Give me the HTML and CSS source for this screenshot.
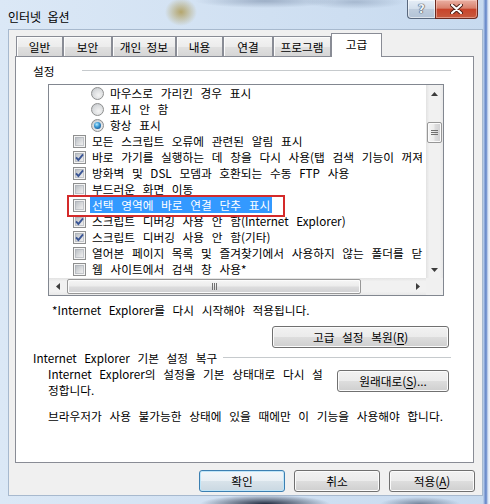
FILE: index.html
```html
<!DOCTYPE html>
<html lang="ko">
<head>
<meta charset="utf-8">
<title>인터넷 옵션</title>
<link rel="stylesheet" href="styles.css">
</head>
<body>
<div class="window">
  <div class="titlebar">
    <span class="title">인터넷 옵션</span>
    <div class="caption">
      <span class="cap-btn help">?</span>
      <span class="cap-btn close"><svg width="13" height="10" viewBox="0 0 13 10"><path d="M2 1L11 9M11 1L2 9" stroke="#4a1c14" stroke-width="4" stroke-linecap="round"/><path d="M2 1L11 9M11 1L2 9" stroke="#fff" stroke-width="2.2" stroke-linecap="round"/></svg></span>
    </div>
  </div>
  <div class="client">
    <div class="tabs">
      <span class="tab w1">일반</span>
      <span class="tab w2">보안</span>
      <span class="tab w3">개인 정보</span>
      <span class="tab w4">내용</span>
      <span class="tab w5">연결</span>
      <span class="tab w6">프로그램</span>
      <span class="tab active w7">고급</span>
    </div>
    <div class="panel">
      <div class="head head-settings"><span>설정</span><i class="rule"></i></div>
      <div class="listbox">
        <div class="items">
          <div class="row sub"><span class="radio"></span><span class="label">마우스로 가리킨 경우 표시</span></div>
          <div class="row sub"><span class="radio"></span><span class="label">표시 안 함</span></div>
          <div class="row sub"><span class="radio on"></span><span class="label">항상 표시</span></div>
          <div class="row"><span class="box"></span><span class="label">모든 스크립트 오류에 관련된 알림 표시</span></div>
          <div class="row"><span class="box"><svg class="tick" viewBox="0 0 13 13"><path d="M3 6.3L5.4 9L10 3.4" fill="none" stroke="#3a5595" stroke-width="1.9"/></svg></span><span class="label">바로 가기를 실행하는 데 창을 다시 사용(탭 검색 기능이 꺼져</span></div>
          <div class="row"><span class="box"><svg class="tick" viewBox="0 0 13 13"><path d="M3 6.3L5.4 9L10 3.4" fill="none" stroke="#3a5595" stroke-width="1.9"/></svg></span><span class="label">방화벽 및 DSL 모뎀과 호환되는 수동 FTP 사용</span></div>
          <div class="row"><span class="box"></span><span class="label">부드러운 화면 이동</span></div>
          <div class="row sel"><span class="box"></span><span class="label">선택 영역에 바로 연결 단추 표시</span></div>
          <div class="row"><span class="box"><svg class="tick" viewBox="0 0 13 13"><path d="M3 6.3L5.4 9L10 3.4" fill="none" stroke="#3a5595" stroke-width="1.9"/></svg></span><span class="label">스크립트 디버깅 사용 안 함(Internet Explorer)</span></div>
          <div class="row"><span class="box"><svg class="tick" viewBox="0 0 13 13"><path d="M3 6.3L5.4 9L10 3.4" fill="none" stroke="#3a5595" stroke-width="1.9"/></svg></span><span class="label">스크립트 디버깅 사용 안 함(기타)</span></div>
          <div class="row"><span class="box"></span><span class="label">열어본 페이지 목록 및 즐겨찾기에서 사용하지 않는 폴더를 닫</span></div>
          <div class="row"><span class="box"></span><span class="label">웹 사이트에서 검색 창 사용*</span></div>
          <div class="annot"></div>
        </div>
        <div class="vscroll">
          <span class="sbtn"><svg width="7" height="4" viewBox="0 0 7 4"><path d="M0 4L3.5 0L7 4Z" fill="#3c3c3c"/></svg></span>
          <div class="vtrack"><span class="vthumb"><svg width="7" height="5" viewBox="0 0 7 5"><path d="M0 0.5H7M0 2.5H7M0 4.5H7" stroke="#707070" stroke-width="1"/></svg></span></div>
          <span class="sbtn"><svg width="7" height="4" viewBox="0 0 7 4"><path d="M0 0L3.5 4L7 0Z" fill="#3c3c3c"/></svg></span>
        </div>
        <div class="hscroll">
          <span class="sbtn"><svg width="4" height="7" viewBox="0 0 4 7"><path d="M4 0L0 3.5L4 7Z" fill="#3c3c3c"/></svg></span>
          <div class="htrack"><span class="hthumb"><svg width="5" height="7" viewBox="0 0 5 7"><path d="M0.5 0V7M2.5 0V7M4.5 0V7" stroke="#707070" stroke-width="1"/></svg></span></div>
          <span class="sbtn"><svg width="4" height="7" viewBox="0 0 4 7"><path d="M0 0L4 3.5L0 7Z" fill="#3c3c3c"/></svg></span>
        </div>
        <div class="corner"></div>
      </div>
      <p class="note">*Internet Explorer를 다시 시작해야 적용됩니다.</p>
      <div class="btn-row"><button class="btn btn-wide">고급 설정 복원(<u>R</u>)</button></div>
      <div class="head head-reset"><span>Internet Explorer 기본 설정 복구</span><i class="rule"></i></div>
      <div class="reset-row">
        <p>Internet Explorer의 설정을 기본 상태대로 다시 설<br>정합니다.</p>
        <button class="btn btn-reset">원래대로(<u>S</u>)...</button>
      </div>
      <p class="warn">브라우저가 사용 불가능한 상태에 있을 때에만 이 기능을 사용해야 합니다.</p>
    </div>
    <div class="footer">
      <button class="btn btn-default">확인</button>
      <button class="btn">취소</button>
      <button class="btn">적용(<u>A</u>)</button>
    </div>
  </div>
</div>
</body>
</html>
```

FILE: styles.css
```css
html, body {
  margin: 0;
  padding: 0;
}
body {
  font-family: "Noto Sans CJK KR", "Noto Sans", sans-serif;
  font-size: 11.7px;
  word-spacing: 4.4px;
  color: #000;
}
p {
  margin: 0;
}
.window {
  width: 490px;
  height: 504px;
  overflow: hidden;
  display: flex;
  flex-direction: column;
  background:
    radial-gradient(ellipse 16px 14px at 181px 12px, rgba(175, 155, 85, 0.85), rgba(175, 155, 85, 0)),
    radial-gradient(ellipse 70px 7px at 265px 1px, rgba(95, 115, 145, 0.45), rgba(95, 115, 145, 0)),
    radial-gradient(ellipse 50px 7px at 355px 2px, rgba(95, 115, 145, 0.35), rgba(95, 115, 145, 0)),
    radial-gradient(ellipse 65px 9px at 265px 504px, rgba(25, 35, 55, 0.95), rgba(25, 35, 55, 0)),
    radial-gradient(ellipse 40px 7px at 420px 504px, rgba(60, 75, 100, 0.6), rgba(60, 75, 100, 0)),
    linear-gradient(to right, rgba(0,0,0,0) 483px, #9fb7de 484px, #5d80c6 486px, #d6e2f3 488px, #f4f7fb 490px),
    linear-gradient(to right, #dbe8f6 0, #d0e0f2 55%, #c7daef 100%);
}
.titlebar {
  height: 29px;
  flex: none;
  display: flex;
  justify-content: space-between;
  align-items: flex-start;
}
.title {
  margin: 9px 0 0 8px;
  font-size: 12px;
  line-height: 16px;
  word-spacing: 3px;
}
.caption {
  display: flex;
  margin-right: 12px;
}
.cap-btn {
  height: 19px;
  box-sizing: border-box;
  border: 1px solid #59687d;
  border-top: none;
  display: flex;
  align-items: center;
  justify-content: center;
}
.help {
  width: 28px;
  border-right: none;
  border-radius: 0 0 0 4px;
  background: linear-gradient(#e6eef7, #d2deeb 50%, #bfcddd 51%, #b3c3d6);
  box-shadow: inset 0 0 0 1px rgba(255, 255, 255, 0.55);
  font-family: "DejaVu Sans", sans-serif;
  font-weight: bold;
  font-size: 12px;
  color: #eef3f9;
  text-shadow: 0 0 1px #3b4656, 0 0 1px #3b4656, 0 0 1px #3b4656;
}
.close {
  width: 43px;
  border-radius: 0 0 4px 0;
  border-color: #6b2a20;
  background: linear-gradient(#eab0a3, #d9816d 45%, #c8442b 52%, #c75a3f 100%);
  box-shadow: inset 0 0 0 1px rgba(255, 220, 210, 0.45);
}
.client {
  margin-left: 8px;
  width: 475px;
  height: 467px;
  box-sizing: border-box;
  border: 1px solid #a7b9ce;
  background: #f0f0f0;
  padding-top: 3px;
}
.tabs {
  display: flex;
  align-items: flex-end;
  height: 23px;
  margin-left: 7px;
}
.tab {
  height: 20px;
  box-sizing: border-box;
  border: 1px solid #898c95;
  border-bottom: none;
  background: linear-gradient(#f4f4f4, #ececec 50%, #e0e0e0 51%, #d6d6d6);
  box-shadow: inset 1px 1px 0 #fcfcfc;
  text-align: center;
  line-height: 19px;
  word-spacing: 2px;
}
.tab.active {
  height: 24px;
  margin-bottom: -1px;
  position: relative;
  z-index: 1;
  background: #fff;
  box-shadow: none;
  line-height: 20px;
}
.w1 { width: 47px; }
.w2 { width: 49px; }
.w3 { width: 64px; }
.w4 { width: 47px; }
.w5 { width: 50px; }
.w6 { width: 58px; }
.w7 { width: 51px; }
.panel {
  margin-left: 6px;
  width: 459px;
  height: 407px;
  box-sizing: border-box;
  border: 1px solid #898c95;
  background: #fff;
}
.head {
  display: flex;
  align-items: center;
  height: 16px;
  padding-left: 17px;
  margin-right: 22px;
  white-space: nowrap;
}
.head-settings {
  margin-top: 5px;
}
.head-settings .rule {
  margin-left: 27px;
}
.head-reset {
  margin-top: 1px;
}
.head-reset .rule {
  margin-left: 6px;
}
.rule {
  flex: 1;
  height: 0;
  border-top: 1px solid #c6cacd;
}
.listbox {
  margin: 6px 0 0 32px;
  width: 396px;
  height: 212px;
  box-sizing: border-box;
  border: 1px solid #828790;
  display: grid;
  grid-template-columns: 377px 17px;
  grid-template-rows: 193px 17px;
}
.items {
  position: relative;
  overflow: hidden;
}
.row {
  height: 16px;
  display: flex;
  align-items: center;
  padding-left: 24px;
  white-space: nowrap;
  line-height: 16px;
}
.row.sub {
  padding-left: 42px;
}
.label {
  padding: 0 2px;
}
.sel .label {
  background: #3399ff;
  color: #fff;
}
.box {
  flex: none;
  width: 13px;
  height: 13px;
  margin-right: 4px;
  box-sizing: border-box;
  border: 1px solid #8e8f8f;
  background: #f4f4f4;
  position: relative;
}
.box::before {
  content: "";
  position: absolute;
  left: 1px;
  top: 1px;
  width: 9px;
  height: 9px;
  background: linear-gradient(135deg, #b5bac0, #e4e5e6 70%, #f2f2f3);
  box-shadow: inset 0 0 0 1px rgba(170, 175, 182, 0.6);
}
.tick {
  position: absolute;
  left: -1px;
  top: -1px;
  width: 13px;
  height: 13px;
}
.radio {
  flex: none;
  width: 13px;
  height: 13px;
  margin-right: 4px;
  box-sizing: border-box;
  border: 1px solid #8e8f8f;
  border-radius: 50%;
  background: radial-gradient(circle at 60% 65%, #f4f4f4 0, #dadcde 55%, #b9bec3 100%);
  position: relative;
}
.radio.on::after {
  content: "";
  position: absolute;
  left: 2px;
  top: 2px;
  width: 7px;
  height: 7px;
  border-radius: 50%;
  background: radial-gradient(circle at 40% 35%, #b6ecff 0, #3d9bd6 40%, #15528f 85%);
}
.annot {
  position: absolute;
  left: 18px;
  top: 110px;
  width: 218px;
  height: 22px;
  box-sizing: border-box;
  border: 2px solid #d42a2a;
}
.vscroll {
  display: flex;
  flex-direction: column;
  background: linear-gradient(to right, #e2e2e2, #f1f1f1 20%, #f1f1f1 80%, #e8e8e8);
}
.sbtn {
  flex: none;
  width: 17px;
  height: 17px;
  display: flex;
  align-items: center;
  justify-content: center;
}
.vtrack {
  flex: 1;
  padding-top: 20px;
}
.vthumb {
  display: flex;
  align-items: center;
  justify-content: center;
  margin-left: 1px;
  width: 15px;
  height: 21px;
  box-sizing: border-box;
  border: 1px solid #979797;
  border-radius: 2px;
  background: linear-gradient(to right, #f6f6f6, #ececec 45%, #dcdcdd 55%, #d0d0d2);
  box-shadow: inset 0 0 0 1px #fbfbfb;
}
.hscroll {
  display: flex;
  background: linear-gradient(#e2e2e2, #f1f1f1 20%, #f1f1f1 80%, #e8e8e8);
}
.htrack {
  flex: 1;
}
.hthumb {
  display: flex;
  align-items: center;
  justify-content: center;
  margin: 1px 0 0 1px;
  width: 294px;
  height: 15px;
  box-sizing: border-box;
  border: 1px solid #979797;
  border-radius: 2px;
  background: linear-gradient(#f6f6f6, #ececec 45%, #dcdcdd 55%, #d0d0d2);
  box-shadow: inset 0 0 0 1px #fbfbfb;
}
.corner {
  background: #f0f0f0;
}
.note {
  margin: 6px 0 0 36px;
  line-height: 16px;
  white-space: nowrap;
}
.btn-row {
  display: flex;
  justify-content: flex-end;
  margin: 8px 24px 0 0;
}
.btn {
  font-family: inherit;
  font-size: 11.7px;
  word-spacing: 4.4px;
  color: #000;
  height: 22px;
  width: 86px;
  padding: 0;
  box-sizing: border-box;
  border: 1px solid #707070;
  border-radius: 3px;
  background: linear-gradient(#f2f2f2, #ebebeb 50%, #dddddd 51%, #cfcfcf);
  box-shadow: inset 0 0 0 1px #fbfbfb;
  line-height: 18px;
}
.btn u {
  text-underline-offset: 2px;
}
.btn-wide {
  width: 177px;
}
.btn-reset {
  width: 112px;
  margin-top: 4px;
  flex: none;
}
.btn-default {
  border-color: #3c7fb1;
  box-shadow: inset 0 0 0 1px #bfe5f8;
  background: linear-gradient(#f2f6f9, #e8eff4 50%, #d8e3ea 51%, #cad8e2);
}
.reset-row {
  display: flex;
  justify-content: space-between;
  align-items: flex-start;
  margin: 1px 24px 0 32px;
}
.reset-row p {
  line-height: 16px;
  white-space: nowrap;
}
.warn {
  margin: 10px 0 0 32px;
  line-height: 16px;
  white-space: nowrap;
}
.footer {
  display: flex;
  justify-content: flex-end;
  gap: 9px;
  margin-top: 7px;
  padding-right: 7px;
}
```
